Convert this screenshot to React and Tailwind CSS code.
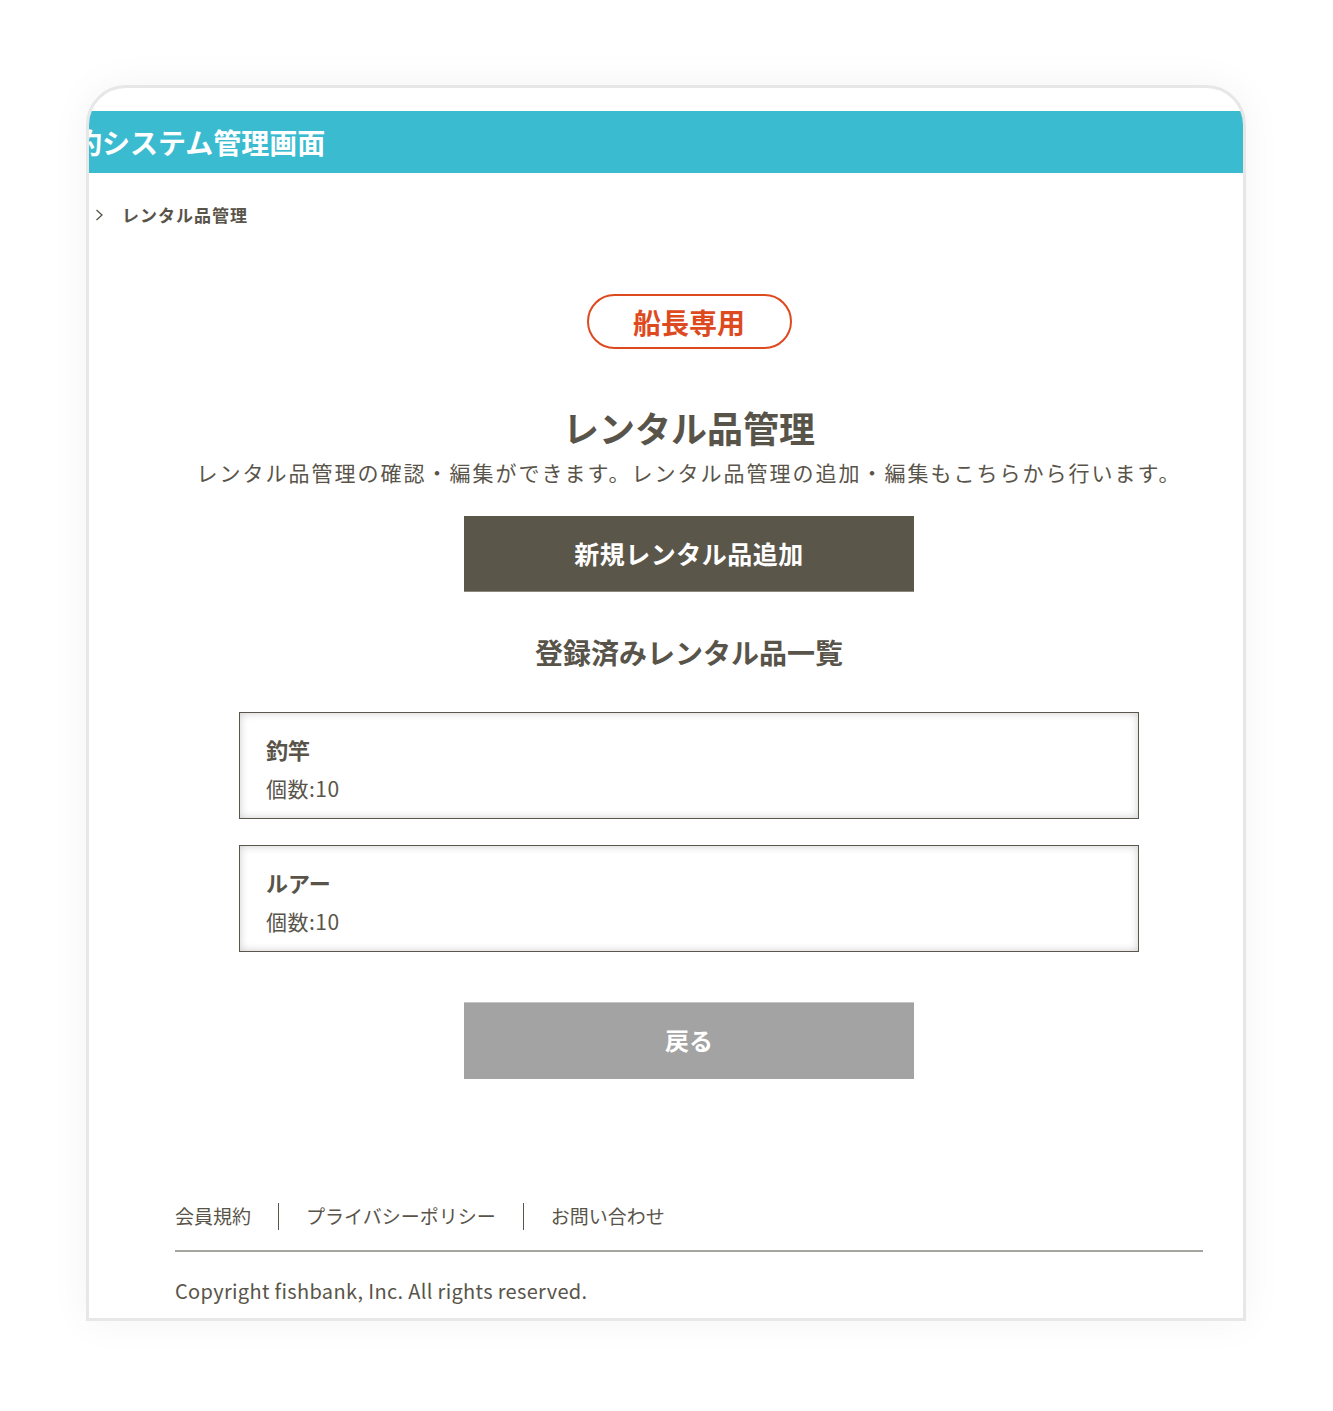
import React from "react";

function Card({ name }) {
  return (
    <div className="w-[900px] h-[107px] border border-[#5b564c] shadow-[inset_0_0_8px_rgba(0,0,0,0.2)] bg-white pl-[26px] pt-[21px] flex flex-col">
      <div className="h-[30px] leading-[30px] text-[22px] font-bold text-[#59544a]">{name}</div>
      <div className="h-[30px] leading-[30px] text-[21px] tracking-[0.5px] mt-[9px] text-[#59544a]">個数:10</div>
    </div>
  );
}

export default function App() {
  return (
    <div
      className="w-[1333px] h-[1411px] bg-white pl-[86px] pt-[85px]"
      style={{ fontFamily: '"Noto Sans CJK JP", "Noto Sans", sans-serif' }}
    >
      <div className="w-[1160px] h-[1236px] border-[3px] border-[#e7e7e7] rounded-t-[40px] overflow-hidden bg-white shadow-[0_0_40px_rgba(0,0,0,0.05)]">
        <div className="w-[1200px] flex flex-col">
          <div className="mt-[23px] h-[62px] bg-[#3bbbd0] flex items-center overflow-hidden">
            <div className="text-[28px] font-bold text-white whitespace-nowrap ml-[-43px] leading-[40px]">
              予約システム管理画面
            </div>
          </div>

          <div className="mt-[27px] h-[30px] flex items-center pl-[6px]">
            <svg width="9" height="12" viewBox="0 0 9 12" className="mr-[18px]">
              <polyline points="1.5,1 7,6 1.5,11" fill="none" stroke="#59544a" strokeWidth="1.3" />
            </svg>
            <span className="text-[17px] font-bold text-[#59544a] tracking-[1px]">レンタル品管理</span>
          </div>

          <div className="flex justify-center mt-[64px]">
            <div className="w-[205px] h-[55px] rounded-full border-2 border-[#de4a1f] flex items-center justify-center text-[28px] font-bold text-[#de4a1f] leading-none">
              船長専用
            </div>
          </div>

          <div className="mt-[56px] h-[44px] leading-[44px] text-center text-[36px] font-bold text-[#59544a]">
            レンタル品管理
          </div>
          <div className="mt-[8px] h-[30px] leading-[30px] text-center text-[21px] tracking-[2px] text-[#59544a]">
            レンタル品管理の確認・編集ができます。レンタル品管理の追加・編集もこちらから行います。
          </div>

          <div className="flex justify-center mt-[29px]">
            <div className="w-[450px] h-[76px] bg-[#5b564a] border-b border-[#8a877f] flex items-center justify-center text-white text-[25px] font-bold tracking-[0.5px]">
              新規レンタル品追加
            </div>
          </div>

          <div className="mt-[40px] h-[40px] leading-[40px] text-center text-[28px] font-bold text-[#59544a]">
            登録済みレンタル品一覧
          </div>

          <div className="mt-[40px] flex flex-col items-center gap-[26px]">
            <Card name="釣竿" />
            <Card name="ルアー" />
          </div>

          <div className="flex justify-center mt-[50px]">
            <div className="w-[450px] h-[77px] bg-[#a3a3a3] border-t border-[#c4c4c4] flex items-center justify-center text-white text-[24px] font-bold pb-[3px]">
              戻る
            </div>
          </div>

          <div className="px-[86px] mt-[122px]">
            <div className="h-[30px] flex items-center text-[19px] text-[#59544a]">
              <span className="pr-[27px]">会員規約</span>
              <span className="border-l border-[#59544a] h-[27px] pl-[27px] pr-[27px] flex items-center">プライバシーポリシー</span>
              <span className="border-l border-[#59544a] h-[27px] pl-[27px] flex items-center">お問い合わせ</span>
            </div>
            <div className="mt-[19px] h-[2px] bg-[#a5a5a0]" />
            <div className="mt-[24px] h-[30px] leading-[30px] text-[20px] tracking-[0.33px] text-[#59544a]">
              Copyright fishbank, Inc. All rights reserved.
            </div>
          </div>
        </div>
      </div>
    </div>
  );
}
